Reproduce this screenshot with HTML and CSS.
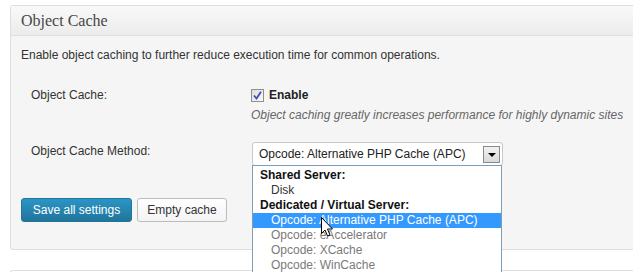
FILE: index.html
```html
<!DOCTYPE html>
<html lang="en">
<head>
  <meta charset="UTF-8">
  <title>Object Cache</title>
  <link rel="stylesheet" href="styles.css">
</head>
<body>
  <div class="postbox">
    <h3 class="hndle">Object Cache</h3>
    <div class="inside">
      <p class="intro">Enable object caching to further reduce execution time for common operations.</p>

      <div class="form-table">
        <div class="row">
          <div class="label">Object Cache:</div>
          <div class="field">
            <label class="check">
              <span class="checkbox">
                <svg width="9" height="9" viewBox="0 0 9 9"><path d="M1 4.5 L3.5 7.5 L8 0.8" fill="none" stroke="#3d4fb8" stroke-width="1.8"/></svg>
              </span>
              <b>Enable</b>
            </label>
            <div class="description">Object caching greatly increases performance for highly dynamic sites</div>
          </div>
        </div>

        <div class="row">
          <div class="label">Object Cache Method:</div>
          <div class="field">
            <div class="select">
              <span>Opcode: Alternative PHP Cache (APC)</span>
              <span class="arrow"></span>
              <ul class="options">
                <li class="group">Shared Server:</li>
                <li>Disk</li>
                <li class="group">Dedicated / Virtual Server:</li>
                <li class="selected">Opcode: Alternative PHP Cache (APC)</li>
                <li class="muted">Opcode: eAccelerator</li>
                <li class="muted">Opcode: XCache</li>
                <li class="muted">Opcode: WinCache</li>
              </ul>
              <svg class="cursor" width="13" height="21" viewBox="0 0 13 21">
                <path d="M0.5 0.5 L0.5 16.5 L4 13 L6.5 19 L9 18 L6.5 12 L11.5 12 Z" fill="#fff" stroke="#000" stroke-width="1"/>
              </svg>
            </div>
          </div>
        </div>
      </div>

      <div class="actions">
        <button class="button-primary">Save all settings</button>
        <button class="button">Empty cache</button>
      </div>
    </div>
  </div>
  <div class="postbox next"></div>
</body>
</html>
```

FILE: styles.css
```css
/* General Styles */
html {
  overflow: hidden;
}

body {
  margin: 0;
  padding: 5px 0 0 10px;
  background: #fff;
  font-family: "Liberation Sans", Arial, sans-serif;
  font-size: 12px;
  color: #333;
  overflow: hidden;
}

.postbox {
  border: 1px solid #dfdfdf;
  border-right: none;
  border-radius: 3px 0 0 3px;
  background: #f5f5f5;
}

.postbox.next {
  margin-top: 20px;
  height: 40px;
  background: #fff;
}

.hndle {
  margin: 0;
  height: 29px;
  line-height: 29px;
  padding-left: 10px;
  border-bottom: 1px solid #dfdfdf;
  background: linear-gradient(to bottom, #f9f9f9, #ececec);
  font-family: "Liberation Serif", Georgia, serif;
  font-size: 16px;
  font-weight: normal;
  color: #464646;
}

.inside {
  padding: 10px 10px 27px 10px;
}

.intro {
  margin: 0;
  line-height: 18px;
}

/* Settings rows */
.form-table {
  margin-top: 22px;
}

.row {
  display: grid;
  grid-template-columns: 220px 1fr;
  padding-left: 10px;
}

.row + .row {
  margin-top: 18px;
}

.label {
  line-height: 18px;
}

.field {
  white-space: nowrap;
}

.check {
  display: flex;
  align-items: center;
  gap: 5px;
  height: 18px;
}

.checkbox {
  width: 11px;
  height: 11px;
  border: 1px solid #8f8f8f;
  background: linear-gradient(to bottom right, #dcdcdc, #fbfbfb);
  display: flex;
  align-items: center;
  justify-content: center;
}

.check b {
  color: #222;
}

.description {
  margin-top: 2px;
  line-height: 18px;
  font-style: italic;
  color: #666;
}

/* Select with open list */
.select {
  position: relative;
  width: 241px;
  height: 22px;
  margin-left: 1px;
  padding: 0 2px 0 6px;
  border: 1px solid #c8c8c8;
  border-radius: 3px;
  background: #fff;
  display: flex;
  align-items: center;
  justify-content: space-between;
  color: #222;
}

.arrow {
  width: 15px;
  height: 15px;
  border: 1px solid #8a8a8a;
  background: linear-gradient(to bottom, #f2f2f2, #d9d9d9);
  position: relative;
}

.arrow::after {
  content: "";
  position: absolute;
  left: 4px;
  top: 6px;
  border-left: 4px solid transparent;
  border-right: 4px solid transparent;
  border-top: 4px solid #000;
}

.options {
  position: absolute;
  left: -1px;
  top: 22px;
  width: 248px;
  margin: 0;
  padding: 2px 0 1px;
  list-style: none;
  background: #fff;
  border: 1px solid #7f9db9;
}

.options li {
  height: 15px;
  line-height: 15px;
  padding-left: 18px;
  color: #333;
}

.options li.group {
  padding-left: 7px;
  font-weight: bold;
  color: #111;
}

.options li.selected {
  background: #3399ff;
  color: #fff;
}

.options li.muted {
  color: #7a7a7a;
}

.cursor {
  position: absolute;
  left: 68px;
  top: 74px;
}

/* Buttons */
.actions {
  margin-top: 32px;
  display: flex;
  gap: 5px;
}

.actions button {
  height: 24px;
  padding: 0;
  border-radius: 3px;
  font-family: "Liberation Sans", Arial, sans-serif;
  font-size: 12px;
  white-space: nowrap;
  cursor: pointer;
}

.button-primary {
  width: 111px;
  border: 1px solid #21759b;
  background: linear-gradient(to bottom, #2a95c5, #21759b);
  color: #fff;
}

.button {
  width: 90px;
  border: 1px solid #bbb;
  background: linear-gradient(to bottom, #fefefe, #f4f4f4);
  color: #333;
}
```
